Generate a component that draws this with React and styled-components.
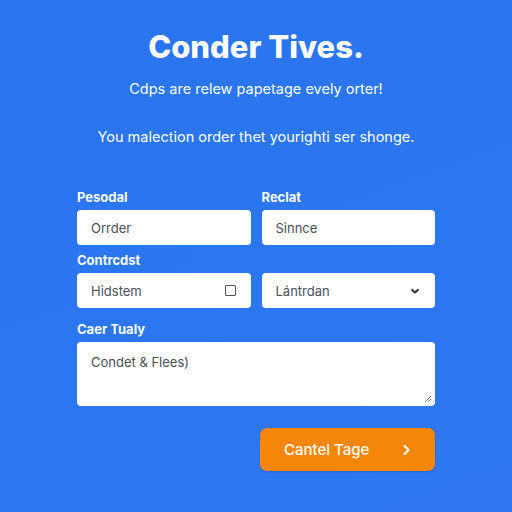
import React from "react";
import styled, { createGlobalStyle } from "styled-components";

const Global = createGlobalStyle`
  html, body {
    margin: 0;
    padding: 0;
  }
  body {
    font-family: Inter, "Noto Sans", "Liberation Sans", sans-serif;
  }
`;

const Page = styled.div`
  width: 512px;
  height: 512px;
  box-sizing: border-box;
  background: linear-gradient(160deg, #2a74ef 0%, #2b76f1 60%, #2f78f2 100%);
  display: flex;
  flex-direction: column;
  align-items: center;
  padding-top: 30px;
  color: #fff;
`;

const Title = styled.h1`
  margin: 0;
  font-size: 31px;
  line-height: 34px;
  font-weight: 800;
  letter-spacing: 0;
`;

const Lead = styled.p`
  margin: ${props => props.top}px 0 0;
  font-size: 14.5px;
  line-height: 18px;
  font-weight: 400;
`;

const Form = styled.form`
  width: 358px;
  margin-top: 43px;
  display: grid;
  grid-template-columns: 1fr 1fr;
  column-gap: 11px;
`;

const Field = styled.div`
  display: flex;
  flex-direction: column;
  grid-column: ${props => (props.wide ? "1 / span 2" : "auto")};
  margin-top: ${props => props.top || 0}px;
`;

const Label = styled.label`
  font-size: 13px;
  line-height: 16px;
  font-weight: 700;
  margin-bottom: 5px;
  min-height: 16px;
`;

const Box = styled.div`
  height: ${props => props.h || 35}px;
  box-sizing: border-box;
  background: #fff;
  border-radius: 4px;
  display: flex;
  align-items: ${props => (props.h ? "flex-start" : "center")};
  justify-content: space-between;
  padding: ${props => (props.h ? "12px 14px" : "0 14px")};
  color: #4a505a;
  font-size: 13px;
  position: relative;
`;

const Square = styled.span`
  width: 9px;
  height: 9px;
  border: 1.5px solid #555;
  border-radius: 1px;
  margin-right: 1px;
`;

const Grip = styled.svg`
  position: absolute;
  right: 3px;
  bottom: 3px;
`;

const Actions = styled.div`
  grid-column: 1 / span 2;
  display: flex;
  justify-content: flex-end;
  margin-top: 22px;
`;

const Submit = styled.button`
  width: 175px;
  height: 43px;
  border: none;
  border-radius: 7px;
  background: #f5860a;
  color: #fff;
  font-family: inherit;
  font-size: 15px;
  font-weight: 500;
  display: flex;
  align-items: center;
  justify-content: space-between;
  padding: 0 22px 0 24px;
  box-shadow: 0 1px 3px rgba(0, 0, 0, 0.12);
`;

const Chevron = ({ dir, color, size }) => (
  <svg width={size} height={size} viewBox="0 0 10 10" fill="none">
    <path
      d={dir === "down" ? "M2.5 4 L5 6.3 L7.5 4" : "M4 2.2 L6.8 5 L4 7.8"}
      stroke={color}
      strokeWidth="1.6"
      strokeLinecap="round"
      strokeLinejoin="round"
    />
  </svg>
);

const App = () => (
  <Page>
    <Global />
    <Title>Conder Tives.</Title>
    <Lead top={16}>Cdps are relew papetage evely orter!</Lead>
    <Lead top={30}>You malection order thet yourighti ser shonge.</Lead>
    <Form onSubmit={e => e.preventDefault()}>
      <Field>
        <Label>Pesodal</Label>
        <Box>Orrder</Box>
      </Field>
      <Field>
        <Label>Reclat</Label>
        <Box>Sinnce</Box>
      </Field>
      <Field top={7}>
        <Label>Contrcdst</Label>
        <Box>
          Hidstem
          <Square />
        </Box>
      </Field>
      <Field top={7}>
        <Label />
        <Box>
          Lántrdan
          <Chevron dir="down" color="#333" size={12} />
        </Box>
      </Field>
      <Field wide top={13}>
        <Label>Caer Tualy</Label>
        <Box h={64}>
          Condet &amp; Flees)
          <Grip width="8" height="8" viewBox="0 0 8 8">
            <path d="M7 1 L1 7 M7 4 L4 7" stroke="#777" strokeWidth="1" />
          </Grip>
        </Box>
      </Field>
      <Actions>
        <Submit type="submit">
          Cantel Tage
          <Chevron dir="right" color="#fff" size={14} />
        </Submit>
      </Actions>
    </Form>
  </Page>
);

export default App;
